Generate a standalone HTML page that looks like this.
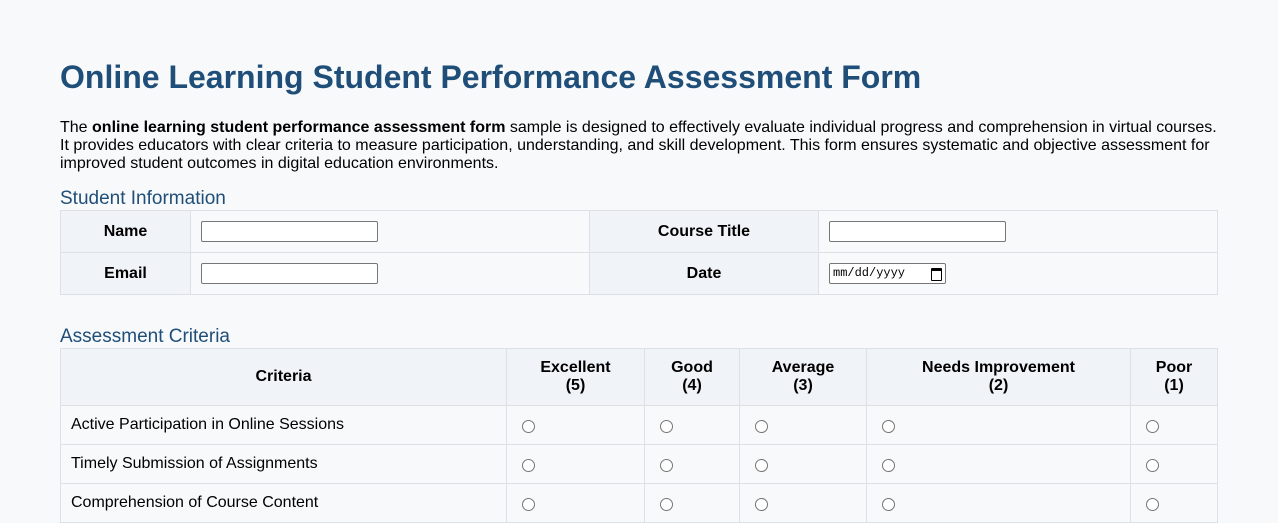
<!DOCTYPE html>
<html><head><style>
html,body{overflow:hidden;height:501px;}
body{margin:0;background:#f8f9fb;font-family:"Liberation Sans",Arial,sans-serif;color:#000;}
.wrap{position:absolute;left:60px;top:1px;width:1157px;}
h1{position:absolute;top:58px;left:0;margin:0;font-size:32px;color:#1f4e79;font-weight:bold;white-space:nowrap;}
p{position:absolute;top:118px;left:0;margin:0;font-size:16px;line-height:18px;width:1160px;}
h2{position:absolute;margin:0;font-size:19px;font-weight:normal;color:#1f4e79;left:0;}
table{position:absolute;left:0;border-collapse:collapse;table-layout:fixed;width:1157px;font-size:16px;}
td,th{border:1px solid #dde1e6;padding:0 10px;}
th{background:#f0f3f7;font-weight:bold;}
.t1 td,.t1 th{height:41px;}
.t1 th{text-align:center;}
input[type=text]{width:173px;height:17px;border:1px solid #767676;border-radius:2px;padding:1px;margin:0;background:#fff;}
.date{display:inline-block;width:112px;height:19px;border:1px solid #767676;border-radius:2px;font-family:"Liberation Mono",monospace;font-size:12px;line-height:19px;padding-left:3px;box-sizing:content-box;background:#fff;position:relative}
.t2 th{height:56px;line-height:18px;}
.t2 td{height:38px;}
.r{display:inline-block;width:11px;height:11px;border:1px solid #767676;border-radius:50%;background:#fff;margin-left:5px;vertical-align:middle;position:relative;top:2px;}
</style></head><body>
<div class="wrap">
<h1>Online Learning Student Performance Assessment Form</h1>
<p>The <b>online learning student performance assessment form</b> sample is designed to effectively evaluate individual progress and comprehension in virtual courses. It provides educators with clear criteria to measure participation, understanding, and skill development. This form ensures systematic and objective assessment for improved student outcomes in digital education environments.</p>
<h2 style="top:187px">Student Information</h2>
<table class="t1" style="top:209px">
<colgroup><col style="width:130px"><col style="width:399px"><col style="width:229px"><col style="width:399px"></colgroup>
<tr><th>Name</th><td><input type="text"></td><th>Course Title</th><td><input type="text"></td></tr>
<tr><th>Email</th><td><input type="text"></td><th>Date</th><td><span class="date">mm/dd/yyyy<span style="position:absolute;right:3px;top:-1px;width:9px;height:9px;border:1.5px solid #000;border-top-width:3px;top:4px;border-radius:1px"></span></span></td></tr>
</table>
<h2 style="top:325px">Assessment Criteria</h2>
<table class="t2" style="top:347px">
<colgroup><col style="width:446px"><col style="width:138px"><col style="width:95px"><col style="width:127px"><col style="width:264px"><col style="width:87px"></colgroup>
<tr><th>Criteria</th><th>Excellent<br>(5)</th><th>Good<br>(4)</th><th>Average<br>(3)</th><th>Needs Improvement<br>(2)</th><th>Poor<br>(1)</th></tr>
<tr><td>Active Participation in Online Sessions</td><td><span class="r"></span></td><td><span class="r"></span></td><td><span class="r"></span></td><td><span class="r"></span></td><td><span class="r"></span></td></tr>
<tr><td>Timely Submission of Assignments</td><td><span class="r"></span></td><td><span class="r"></span></td><td><span class="r"></span></td><td><span class="r"></span></td><td><span class="r"></span></td></tr>
<tr><td>Comprehension of Course Content</td><td><span class="r"></span></td><td><span class="r"></span></td><td><span class="r"></span></td><td><span class="r"></span></td><td><span class="r"></span></td></tr>
</table>
</div>
</body></html>
